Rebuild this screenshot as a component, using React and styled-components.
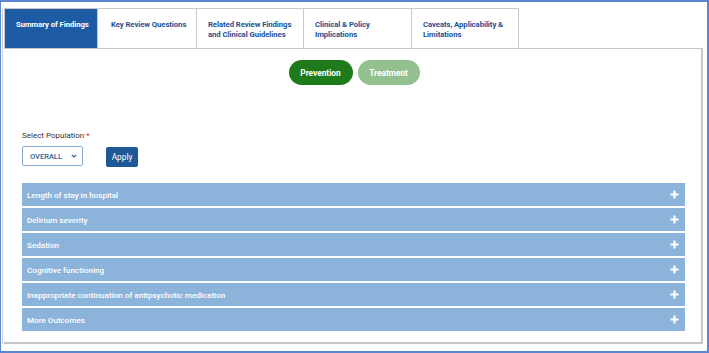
import React from "react";
import styled, { createGlobalStyle } from "styled-components";

const Global = createGlobalStyle`
  html, body { margin: 0; padding: 0; background: #fff; }
  body { font-family: Roboto, "Liberation Sans", sans-serif; }
  * { box-sizing: border-box; }
`;

const Frame = styled.div`
  width: 709px;
  height: 353px;
  border: 2px solid #5b87d2;
  border-left-width: 1px;
  padding: 6px 4px 7px 1px;
  display: flex;
  flex-direction: column;
`;

const Shell = styled.div`
  flex: 1;
  display: flex;
  flex-direction: column;
  border-left: 1px solid #cfcfcf;
  padding-left: 1px;
`;

const TabBar = styled.div`
  display: flex;
  height: 40px;
`;

const Tab = styled.div`
  width: ${(p) => p.$w}px;
  border: 1px solid #c9c9c9;
  border-left-width: ${(p) => (p.$first ? 1 : 0)}px;
  border-bottom: none;
  background: ${(p) => (p.$active ? "#1d5ba4" : "#fff")};
  color: ${(p) => (p.$active ? "#fff" : "#1d4f92")};
  font-size: 7.7px;
  font-weight: 700;
  letter-spacing: -0.05px;
  line-height: 10px;
  white-space: nowrap;
  padding: 11px 0 0 ${(p) => p.$pl}px;
`;

const Panel = styled.div`
  flex: 1;
  border: 1px solid #c6c6c6;
  border-right-width: 2px;
  border-bottom-width: 2px;
  border-left: none;
  background: #fff;
  display: flex;
  flex-direction: column;
  padding: 11px 16px 0 18px;
`;

const PillRow = styled.div`
  display: flex;
  justify-content: center;
  gap: 5px;
  padding-left: 1px;
`;

const Pill = styled.div`
  width: ${(p) => p.$w}px;
  height: 25px;
  border-radius: 13px;
  background: ${(p) => (p.$active ? "#1f7a1c" : "#92c08f")};
  color: #fff;
  font-size: 8.3px;
  font-weight: 700;
  display: flex;
  align-items: center;
  justify-content: center;
`;

const Label = styled.div`
  margin-top: 45px;
  font-size: 8px;
  color: #333;
  line-height: 11px;
  span { color: #d32f2f; }
`;

const Controls = styled.div`
  display: flex;
  align-items: flex-start;
  gap: 23px;
  margin-top: 5px;
`;

const Select = styled.div`
  width: 61px;
  height: 20px;
  border: 1px solid #86abd0;
  border-radius: 2px;
  display: flex;
  align-items: center;
  justify-content: space-between;
  padding: 0 5px 0 7px;
  color: #2c5f95;
  font-size: 7.5px;
  font-weight: 500;
`;

const Button = styled.div`
  width: 32px;
  height: 20px;
  margin-top: 1px;
  border-radius: 2px;
  background: #1f5896;
  color: #fff;
  font-size: 8.3px;
  display: flex;
  align-items: center;
  justify-content: center;
`;

const List = styled.div`
  margin-top: 16px;
  display: flex;
  flex-direction: column;
  gap: 2px;
`;

const Row = styled.div`
  height: 23px;
  background: #8cb3da;
  color: #fff;
  font-size: 8.1px;
  font-weight: 500;
  display: flex;
  align-items: center;
  justify-content: space-between;
  padding: 0 6px 0 5px;
`;

const Plus = styled.svg`
  width: 9px;
  height: 9px;
`;

const tabs = [
  { k: "sof", l: ["Summary of Findings"], w: 94, pl: 11, active: true },
  { k: "krq", l: ["Key Review Questions"], w: 99, pl: 13 },
  { k: "rrf", l: ["Related Review Findings", "and Clinical Guidelines"], w: 107, pl: 11 },
  { k: "cpi", l: ["Clinical & Policy", "Implications"], w: 108, pl: 11 },
  { k: "cal", l: ["Caveats, Applicability &", "Limitations"], w: 107, pl: 11 },
];

const rows = [
  "Length of stay in hospital",
  "Delirium severity",
  "Sedation",
  "Cognitive functioning",
  "Inappropriate continuation of antipsychotic medication",
  "More Outcomes",
];

export default function App() {
  return (
    <>
      <Global />
      <Frame>
        <Shell>
          <TabBar>
            {tabs.map((t, i) => (
              <Tab key={t.k} $w={t.w} $pl={t.pl} $active={t.active} $first={i === 0}>
                {t.l.map((line, j) => (
                  <React.Fragment key={j}>
                    {j > 0 && <br />}
                    {line}
                  </React.Fragment>
                ))}
              </Tab>
            ))}
          </TabBar>
          <Panel>
            <PillRow>
              <Pill $w={64} $active>Prevention</Pill>
              <Pill $w={62}>Treatment</Pill>
            </PillRow>
            <Label>
              Select Population <span>*</span>
            </Label>
            <Controls>
              <Select>
                OVERALL
                <svg width="6" height="4" viewBox="0 0 6 4">
                  <path d="M0.8 0.8 L3 3 L5.2 0.8" fill="none" stroke="#2c5f95" strokeWidth="1.2" />
                </svg>
              </Select>
              <Button>Apply</Button>
            </Controls>
            <List>
              {rows.map((r) => (
                <Row key={r}>
                  {r}
                  <Plus viewBox="0 0 10 10">
                    <path d="M5 0.5 V9.5 M0.5 5 H9.5" stroke="#fff" strokeWidth="2.4" />
                  </Plus>
                </Row>
              ))}
            </List>
          </Panel>
        </Shell>
      </Frame>
    </>
  );
}
